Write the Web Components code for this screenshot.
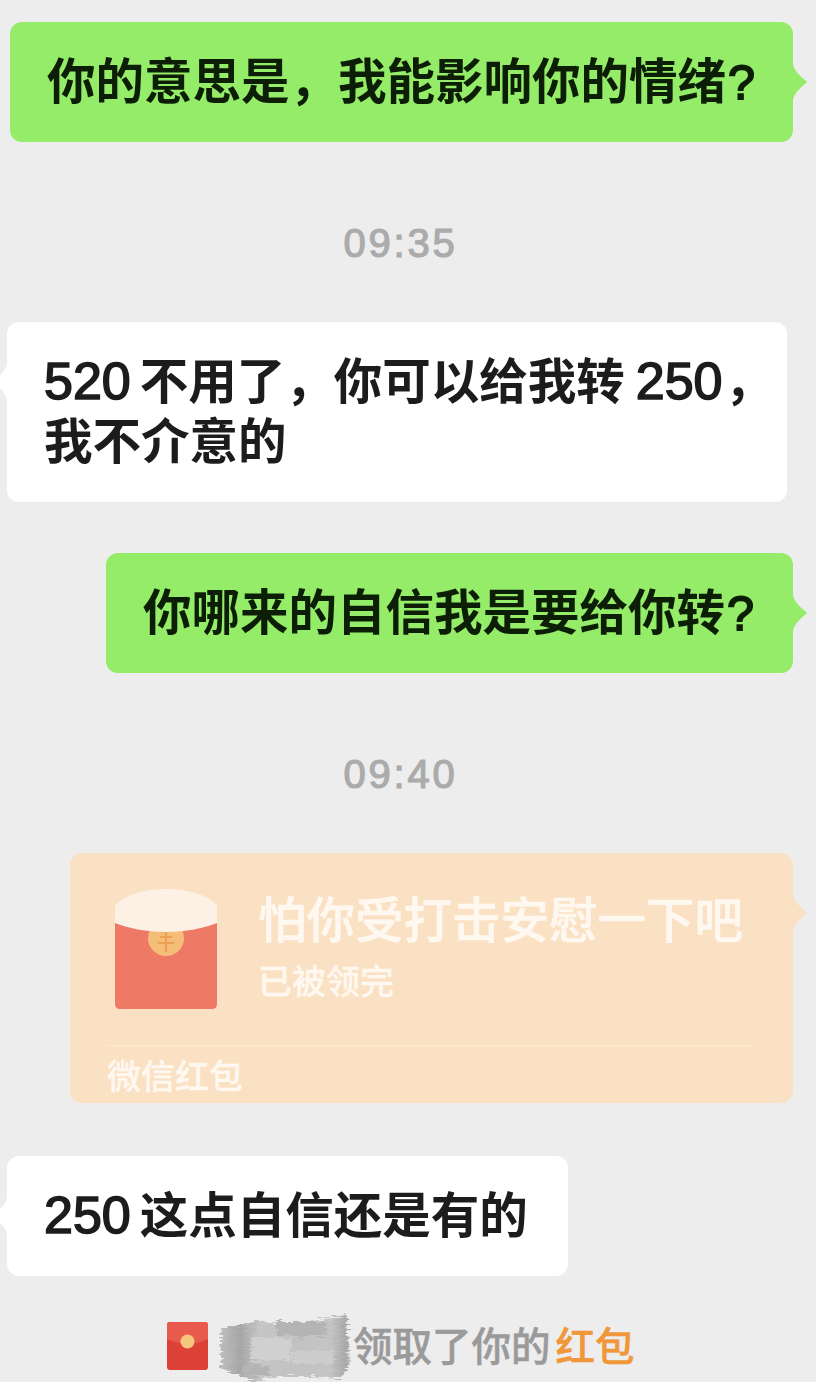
<!DOCTYPE html>
<html lang="zh">
<head>
<meta charset="utf-8">
<title>chat</title>
<style>
  html, body { margin: 0; height: 1382px; overflow: hidden; background: #ededed; }
</style>
</head>
<body>
<chat-screen>
  <chat-bubble side="right" style="margin-top:22px">你的意思是，我能影响你的情绪<i>?</i></chat-bubble>
  <chat-time style="margin-top:71px">09:35</chat-time>
  <chat-bubble side="left" style="margin-top:49px;width:780px"><b class="after">520</b>不用了，你可以给我转<b class="before">250</b>，<br>我不介意的</chat-bubble>
  <chat-bubble side="right" style="margin-top:51px;width:687px">你哪来的自信我是要给你转<i>?</i></chat-bubble>
  <chat-time style="margin-top:71px">09:40</chat-time>
  <red-packet style="margin-top:49px" title-text="怕你受打击安慰一下吧" status="已被领完" brand="微信红包"></red-packet>
  <chat-bubble side="left" style="margin-top:53px;width:561px"><b class="after">250</b>这点自信还是有的</chat-bubble>
  <packet-notice style="margin-top:38px"></packet-notice>
</chat-screen>

<script>
const TEXT_FONT = '"Liberation Sans", "Noto Sans CJK SC", sans-serif';

class ChatScreen extends HTMLElement {
  constructor() {
    super();
    this.attachShadow({ mode: 'open' });
    this.shadowRoot.innerHTML = `
      <style>
        :host {
          display: flex;
          flex-direction: column;
          width: 816px;
          height: 1382px;
          background: #ededed;
          overflow: hidden;
        }
      </style>
      <slot></slot>
    `;
  }
}

// tail points outward from the bubble edge, 14px wide and 36px tall
const tailPath = (right) => right
  ? 'M0 0C1 6 6 11 12.500 16.500C14 17.500 14 18.500 12.500 19.500C6 25 1 30 0 36Z'
  : 'M14 0C13 6 8 11 1.500 16.500C0 17.500 0 18.500 1.500 19.500C8 25 13 30 14 36Z';

class ChatBubble extends HTMLElement {
  constructor() {
    super();
    this.attachShadow({ mode: 'open' });
  }

  connectedCallback() {
    const right = this.getAttribute('side') === 'right';
    const fill = right ? '#95ec69' : '#fff';

    this.shadowRoot.innerHTML = `
      <style>
        :host {
          display: block;
          position: relative;
          flex: none;
          box-sizing: border-box;
          width: fit-content;
          padding: 30px 38px 30px 37px;
          border-radius: 12px;
          font: 700 48.500px/60px ${TEXT_FONT};
          white-space: nowrap;
          color: ${right ? '#0c1f06' : '#1c1c1c'};
          background: ${fill};
          margin-${right ? 'left: auto' : 'left: 7px'};
          margin-${right ? 'right: 23px' : 'right: auto'};
        }
        ::slotted(b) {
          font-size: 52px;
          line-height: 1;
          font-weight: 400;
          -webkit-text-stroke: 1.600px currentColor;
        }
        ::slotted(i) {
          font-style: normal;
          font-weight: 400;
          line-height: 1;
          margin-left: 2px;
          -webkit-text-stroke: 1.800px currentColor;
        }
        ::slotted(b.after) { margin-right: 9px; }
        ::slotted(b.before) { margin-left: 11px; margin-right: 2px; }
        .tail {
          position: absolute;
          top: 42px;
          ${right ? 'right: -14px' : 'left: -14px'};
        }
      </style>
      <svg class="tail" width="14" height="36" viewBox="0 0 14 36"><path d="${tailPath(right)}" fill="${fill}"/></svg>
      <slot></slot>
    `;
  }
}

class ChatTime extends HTMLElement {
  constructor() {
    super();
    this.attachShadow({ mode: 'open' });
    this.shadowRoot.innerHTML = `
      <style>
        :host {
          display: block;
          flex: none;
          width: 801px;
          height: 60px;
          text-align: center;
          font: 400 40px/60px "Liberation Sans", sans-serif;
          letter-spacing: 2.800px;
          -webkit-text-stroke: 1.200px #ababab;
          color: #ababab;
        }
      </style>
      <slot></slot>
    `;
  }
}

class RedPacket extends HTMLElement {
  constructor() {
    super();
    this.attachShadow({ mode: 'open' });
  }

  connectedCallback() {
    this.shadowRoot.innerHTML = `
      <style>
        :host {
          display: block;
          position: relative;
          flex: none;
          box-sizing: border-box;
          width: 723px;
          height: 250px;
          margin-left: 70px;
          border-radius: 12px;
          background: #fbe1c3;
          color: #fff8f0;
          font-family: "Noto Sans CJK SC", sans-serif;
          font-weight: 500;
        }
        .tail { position: absolute; top: 42px; right: -14px; }
        .main {
          display: flex;
          gap: 41px;
          height: 192px;
          box-sizing: border-box;
          padding: 36px 0 0 45px;
        }
        .info { display: flex; flex-direction: column; }
        .title {
          font-size: 48.500px;
          line-height: 60px;
          margin-top: -2px;
          white-space: nowrap;
          -webkit-text-stroke: 0.600px #fff8f0;
        }
        .status { font-size: 34px; line-height: 44px; margin-top: 11px; -webkit-text-stroke: 0.300px #fff8f0; }
        .foot {
          margin: 0 38px 0 37px;
          border-top: 1px solid #fde9d4;
          font-size: 34px;
          line-height: 58px;
          -webkit-text-stroke: 0.300px #fff8f0;
        }
      </style>
      <svg class="tail" width="14" height="36" viewBox="0 0 14 36"><path d="${tailPath(true)}" fill="#fbe1c3"/></svg>
      <div class="main">
        <svg width="102" height="120" viewBox="0 0 102 120">
          <path d="M0 20H102V115Q102 120 97 120H5Q0 120 0 115Z" fill="#ee7a66"/>
          <circle cx="51" cy="49" r="18" fill="#f4bd78"/>
          <path d="M44 42H58M45 48H57M43 54H59M51 42V63M46 36L49 41M56 36L53 41" fill="none" stroke="#ec9f55" stroke-width="2.200"/>
          <path d="M0 17C8 6 30 0 51 0C72 0 94 6 102 17V34C90 39 70 43 51 43C32 43 12 39 0 34Z" fill="#fdf1e6"/>
        </svg>
        <div class="info">
          <div class="title">${this.getAttribute('title-text')}</div>
          <div class="status">${this.getAttribute('status')}</div>
        </div>
      </div>
      <div class="foot">${this.getAttribute('brand')}</div>
    `;
  }
}

class PacketNotice extends HTMLElement {
  constructor() {
    super();
    this.attachShadow({ mode: 'open' });
    this.shadowRoot.innerHTML = `
      <style>
        :host {
          display: flex;
          align-items: center;
          flex: none;
          height: 60px;
          padding-left: 167px;
          font: 500 39.500px/60px "Noto Sans CJK SC", sans-serif;
          -webkit-text-stroke: 0.500px currentColor;
          color: #9a9a9a;
          white-space: nowrap;
        }
        .icon { flex: none; margin: 4px 9px 0 0; }
        .smudge { flex: none; margin: 8px 3px 0 0; overflow: visible; }
        .link { color: #f0973a; margin-left: 5px; }
      </style>
      <svg class="icon" width="41" height="48" viewBox="0 0 41 48">
        <rect width="41" height="48" rx="3" fill="#dd4136"/>
        <path d="M0 3Q0 0 3 0H38Q41 0 41 3V17Q21 27 0 17Z" fill="#e85a4c"/>
        <circle cx="20.500" cy="19.500" r="7" fill="#f5c77e"/>
      </svg>
      <svg class="smudge" width="133" height="68" viewBox="0 0 133 68" aria-hidden="true">
        <defs>
          <linearGradient id="wash" x1="0" x2="1" y1="0" y2="0">
            <stop offset="0" stop-color="#bdbdbd"/>
            <stop offset="0.15" stop-color="#a6a6a6"/>
            <stop offset="0.3" stop-color="#c6c6c6"/>
            <stop offset="0.55" stop-color="#c2c2c2"/>
            <stop offset="0.85" stop-color="#c4c4c4"/>
            <stop offset="0.97" stop-color="#a8a8a8"/>
            <stop offset="1" stop-color="#c0c0c0"/>
          </linearGradient>
          <filter id="rough" x="-15%" y="-25%" width="130%" height="150%">
            <feTurbulence type="fractalNoise" baseFrequency="0.09 0.6" numOctaves="3" seed="7" result="n"/>
            <feDisplacementMap in="SourceGraphic" in2="n" scale="10" xChannelSelector="R" yChannelSelector="G"/>
            <feGaussianBlur stdDeviation="0.700"/>
          </filter>
        </defs>
        <g filter="url(#rough)">
          <path d="M4 14L48 6L62 12L130 2L133 50L124 64L60 62L38 68L4 54Z" fill="url(#wash)"/>
          <rect x="60" y="8" width="50" height="14" fill="#b4b4b4"/>
          <rect x="34" y="24" width="40" height="22" fill="#d0d0d0"/>
          <rect x="76" y="36" width="40" height="14" fill="#cdcdcd"/>
          <rect x="26" y="52" width="26" height="10" fill="#b4b4b4"/>
        </g>
      </svg>
      <span>领取了你的</span><span class="link">红包</span>
    `;
  }
}

customElements.define('chat-screen', ChatScreen);
customElements.define('chat-bubble', ChatBubble);
customElements.define('chat-time', ChatTime);
customElements.define('red-packet', RedPacket);
customElements.define('packet-notice', PacketNotice);
</script>
</body>
</html>
